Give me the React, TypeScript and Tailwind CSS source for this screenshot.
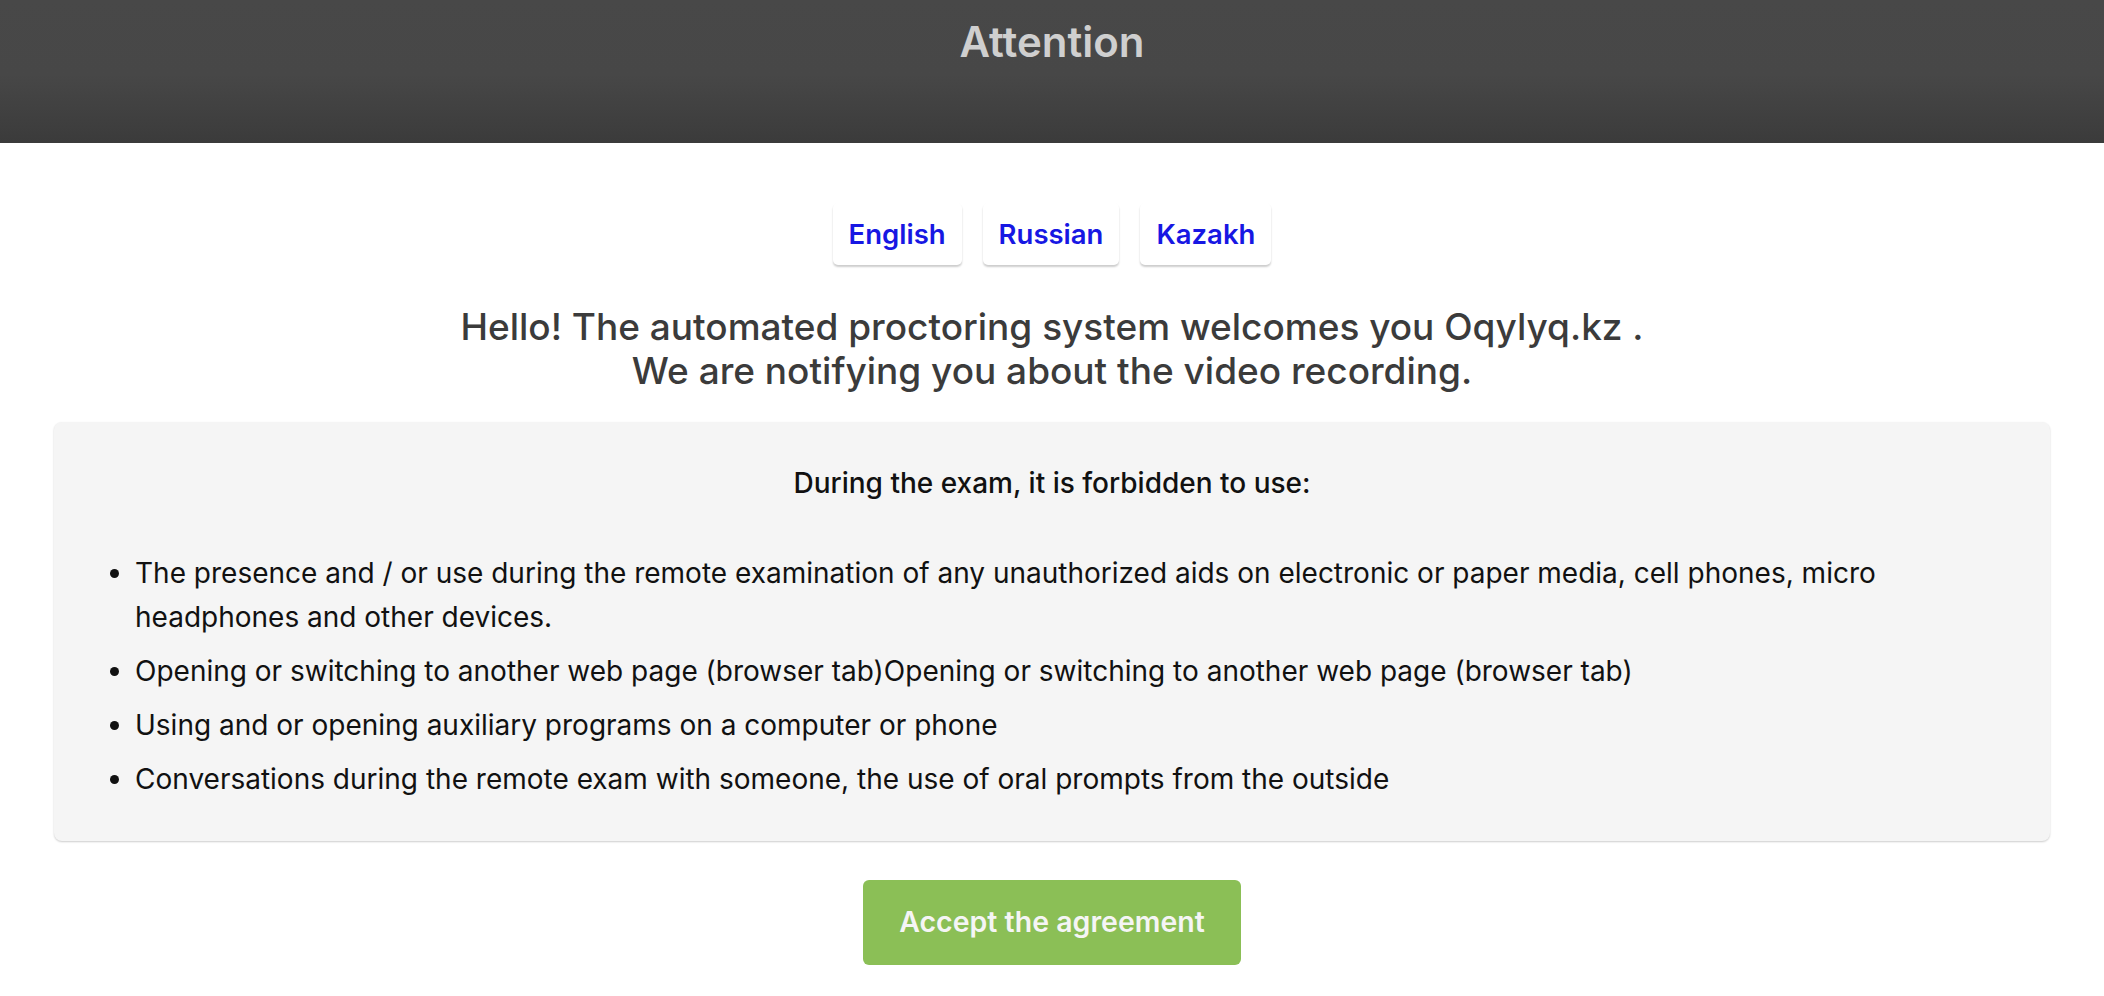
const items = [
  'The presence and / or use during the remote examination of any unauthorized aids on electronic or paper media, cell phones, micro headphones and other devices.',
  'Opening or switching to another web page (browser tab)Opening or switching to another web page (browser tab)',
  'Using and or opening auxiliary programs on a computer or phone',
  'Conversations during the remote exam with someone, the use of oral prompts from the outside',
];

const languages = ['English', 'Russian', 'Kazakh'];

export default function App() {
  return (
    <div className="min-h-[996px] bg-white font-['Inter',sans-serif]">
      <header className="h-[143px] bg-[linear-gradient(to_bottom,#484848_0%,#474747_52%,#3b3b3b_100%)] flex justify-center pt-[14px]">
        <h1 className="text-[42px] leading-[56px] font-semibold text-[#cfcfcf]">Attention</h1>
      </header>

      <main className="flex flex-col items-center">
        <div className="flex gap-[21px] mt-[60px]">
          {languages.map((l) => (
            <button
              key={l}
              className="px-4 pt-[17px] pb-[17px] text-[27.5px] leading-[28px] font-semibold text-[#1717e3] bg-white rounded-[5px] shadow-[0_2px_2px_rgba(0,0,0,0.2)]"
            >
              {l}
            </button>
          ))}
        </div>

        <h2 className="mt-[40px] text-center text-[37px] leading-[44px] font-medium text-[#3b3b3b]">
          Hello! The automated proctoring system welcomes you Oqylyq.kz .
          <br />
          We are notifying you about the video recording.
        </h2>

        <section className="mt-[29px] self-stretch mx-[54px] bg-[#f5f5f5] rounded-[8px] shadow-[0_1px_2px_rgba(0,0,0,0.2)] px-[40px] pt-[43px] pb-[40px]">
          <p className="text-center text-[28px] leading-[36px] font-medium text-[#111]">
            During the exam, it is forbidden to use:
          </p>
          <ul className="mt-[50px] list-disc pl-[41px] pr-[60px] text-[28px] leading-[44px] text-[#111] space-y-[10px]">
            {items.map((t, i) => (
              <li key={i}>{t}</li>
            ))}
          </ul>
        </section>

        <button className="mt-[39px] w-[378px] h-[85px] rounded-[6px] bg-[#8bbf56] text-[28.5px] font-semibold text-[#f5f5f5]">
          Accept the agreement
        </button>
      </main>
    </div>
  );
}
